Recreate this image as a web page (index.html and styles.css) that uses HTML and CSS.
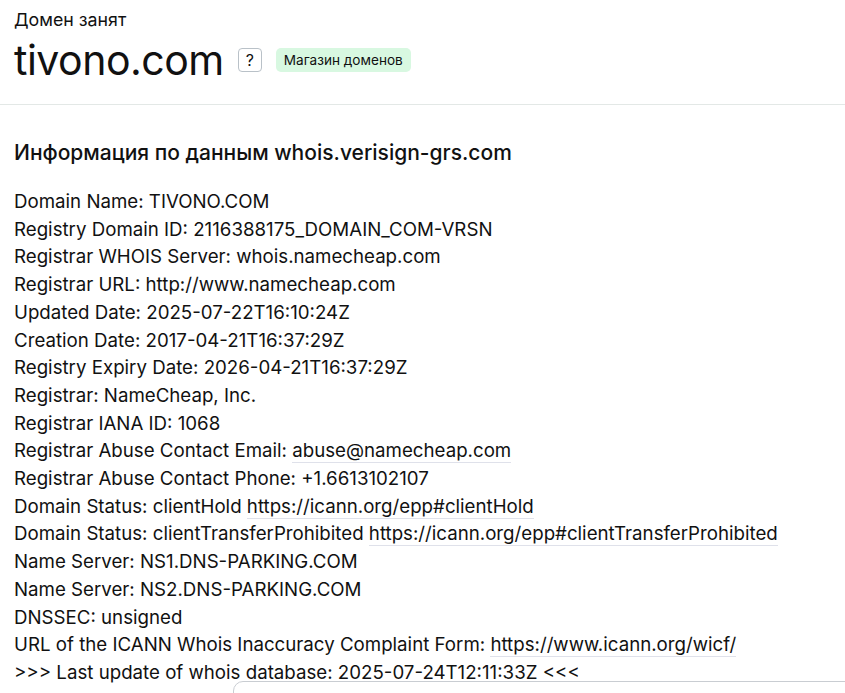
FILE: index.html
```html
<!DOCTYPE html>
<html lang="ru">
<head>
    <meta charset="UTF-8">
    <meta name="viewport" content="width=device-width, initial-scale=1.0">
    <title>tivono.com — Домен занят</title>
    <link rel="stylesheet" href="styles.css">
</head>
<body>
    <div class="header">
        <div class="status">Домен занят</div>
        <div class="domain-row">
            <h1>tivono.com</h1>
            <span class="help">?</span>
            <span class="badge">Магазин доменов</span>
        </div>
    </div>
    <div class="whois">
        <h2>Информация по данным whois.verisign-grs.com</h2>
        <div class="lines">
            <div>Domain Name: TIVONO.COM</div>
            <div>Registry Domain ID: 2116388175_DOMAIN_COM-VRSN</div>
            <div>Registrar WHOIS Server: whois.namecheap.com</div>
            <div>Registrar URL: http://www.namecheap.com</div>
            <div>Updated Date: 2025-07-22T16:10:24Z</div>
            <div>Creation Date: 2017-04-21T16:37:29Z</div>
            <div>Registry Expiry Date: 2026-04-21T16:37:29Z</div>
            <div>Registrar: NameCheap, Inc.</div>
            <div>Registrar IANA ID: 1068</div>
            <div>Registrar Abuse Contact Email: <a href="#">abuse@namecheap.com</a></div>
            <div>Registrar Abuse Contact Phone: +1.6613102107</div>
            <div>Domain Status: clientHold <a href="#">https://icann.org/epp#clientHold</a></div>
            <div>Domain Status: clientTransferProhibited <a href="#">https://icann.org/epp#clientTransferProhibited</a></div>
            <div>Name Server: NS1.DNS-PARKING.COM</div>
            <div>Name Server: NS2.DNS-PARKING.COM</div>
            <div>DNSSEC: unsigned</div>
            <div>URL of the ICANN Whois Inaccuracy Complaint Form: <a href="#">https://www.icann.org/wicf/</a></div>
            <div>&gt;&gt;&gt; Last update of whois database: 2025-07-24T12:11:33Z &lt;&lt;&lt;</div>
        </div>
    </div>
    <div class="popup"></div>
</body>
</html>
```

FILE: styles.css
```css
body {
    font-family: Inter, "Noto Sans", sans-serif;
    color: #111;
    background: #fff;
    margin: 0;
}
.header {
    padding: 8px 14px 0;
    height: 96px;
    border-bottom: 1px solid #e3e8e6;
}
.status {
    font-size: 17.8px;
    line-height: 24px;
}
.domain-row {
    display: flex;
    align-items: center;
    margin-top: 4px;
}
h1 {
    font-size: 41px;
    font-weight: 400;
    letter-spacing: -0.5px;
    margin: 0;
    line-height: 48px;
}
.help {
    width: 22px;
    height: 22px;
    border: 1px solid #b9c1c8;
    border-radius: 4px;
    margin-left: 14px;
    display: flex;
    align-items: center;
    justify-content: center;
    font-size: 16px;
}
.badge {
    background: #d8f8e1;
    border-radius: 5px;
    margin-left: 14px;
    padding: 0 8px;
    height: 24px;
    line-height: 24px;
    font-size: 13.6px;
}
.whois {
    padding: 33px 14px 0;
}
h2 {
    font-size: 21px;
    font-weight: 500;
    margin: 0 0 20px;
    line-height: 30px;
}
.lines {
    font-size: 18.7px;
    line-height: 27.7px;
}
.lines a {
    color: inherit;
    text-decoration: none;
    border-bottom: 1px solid #dfe1ea;
}
.popup {
    position: fixed;
    left: 233px;
    top: 681px;
    width: 700px;
    height: 100px;
    border: 1px solid #c9cdd2;
    border-radius: 10px;
    background: #fff;
}
```
